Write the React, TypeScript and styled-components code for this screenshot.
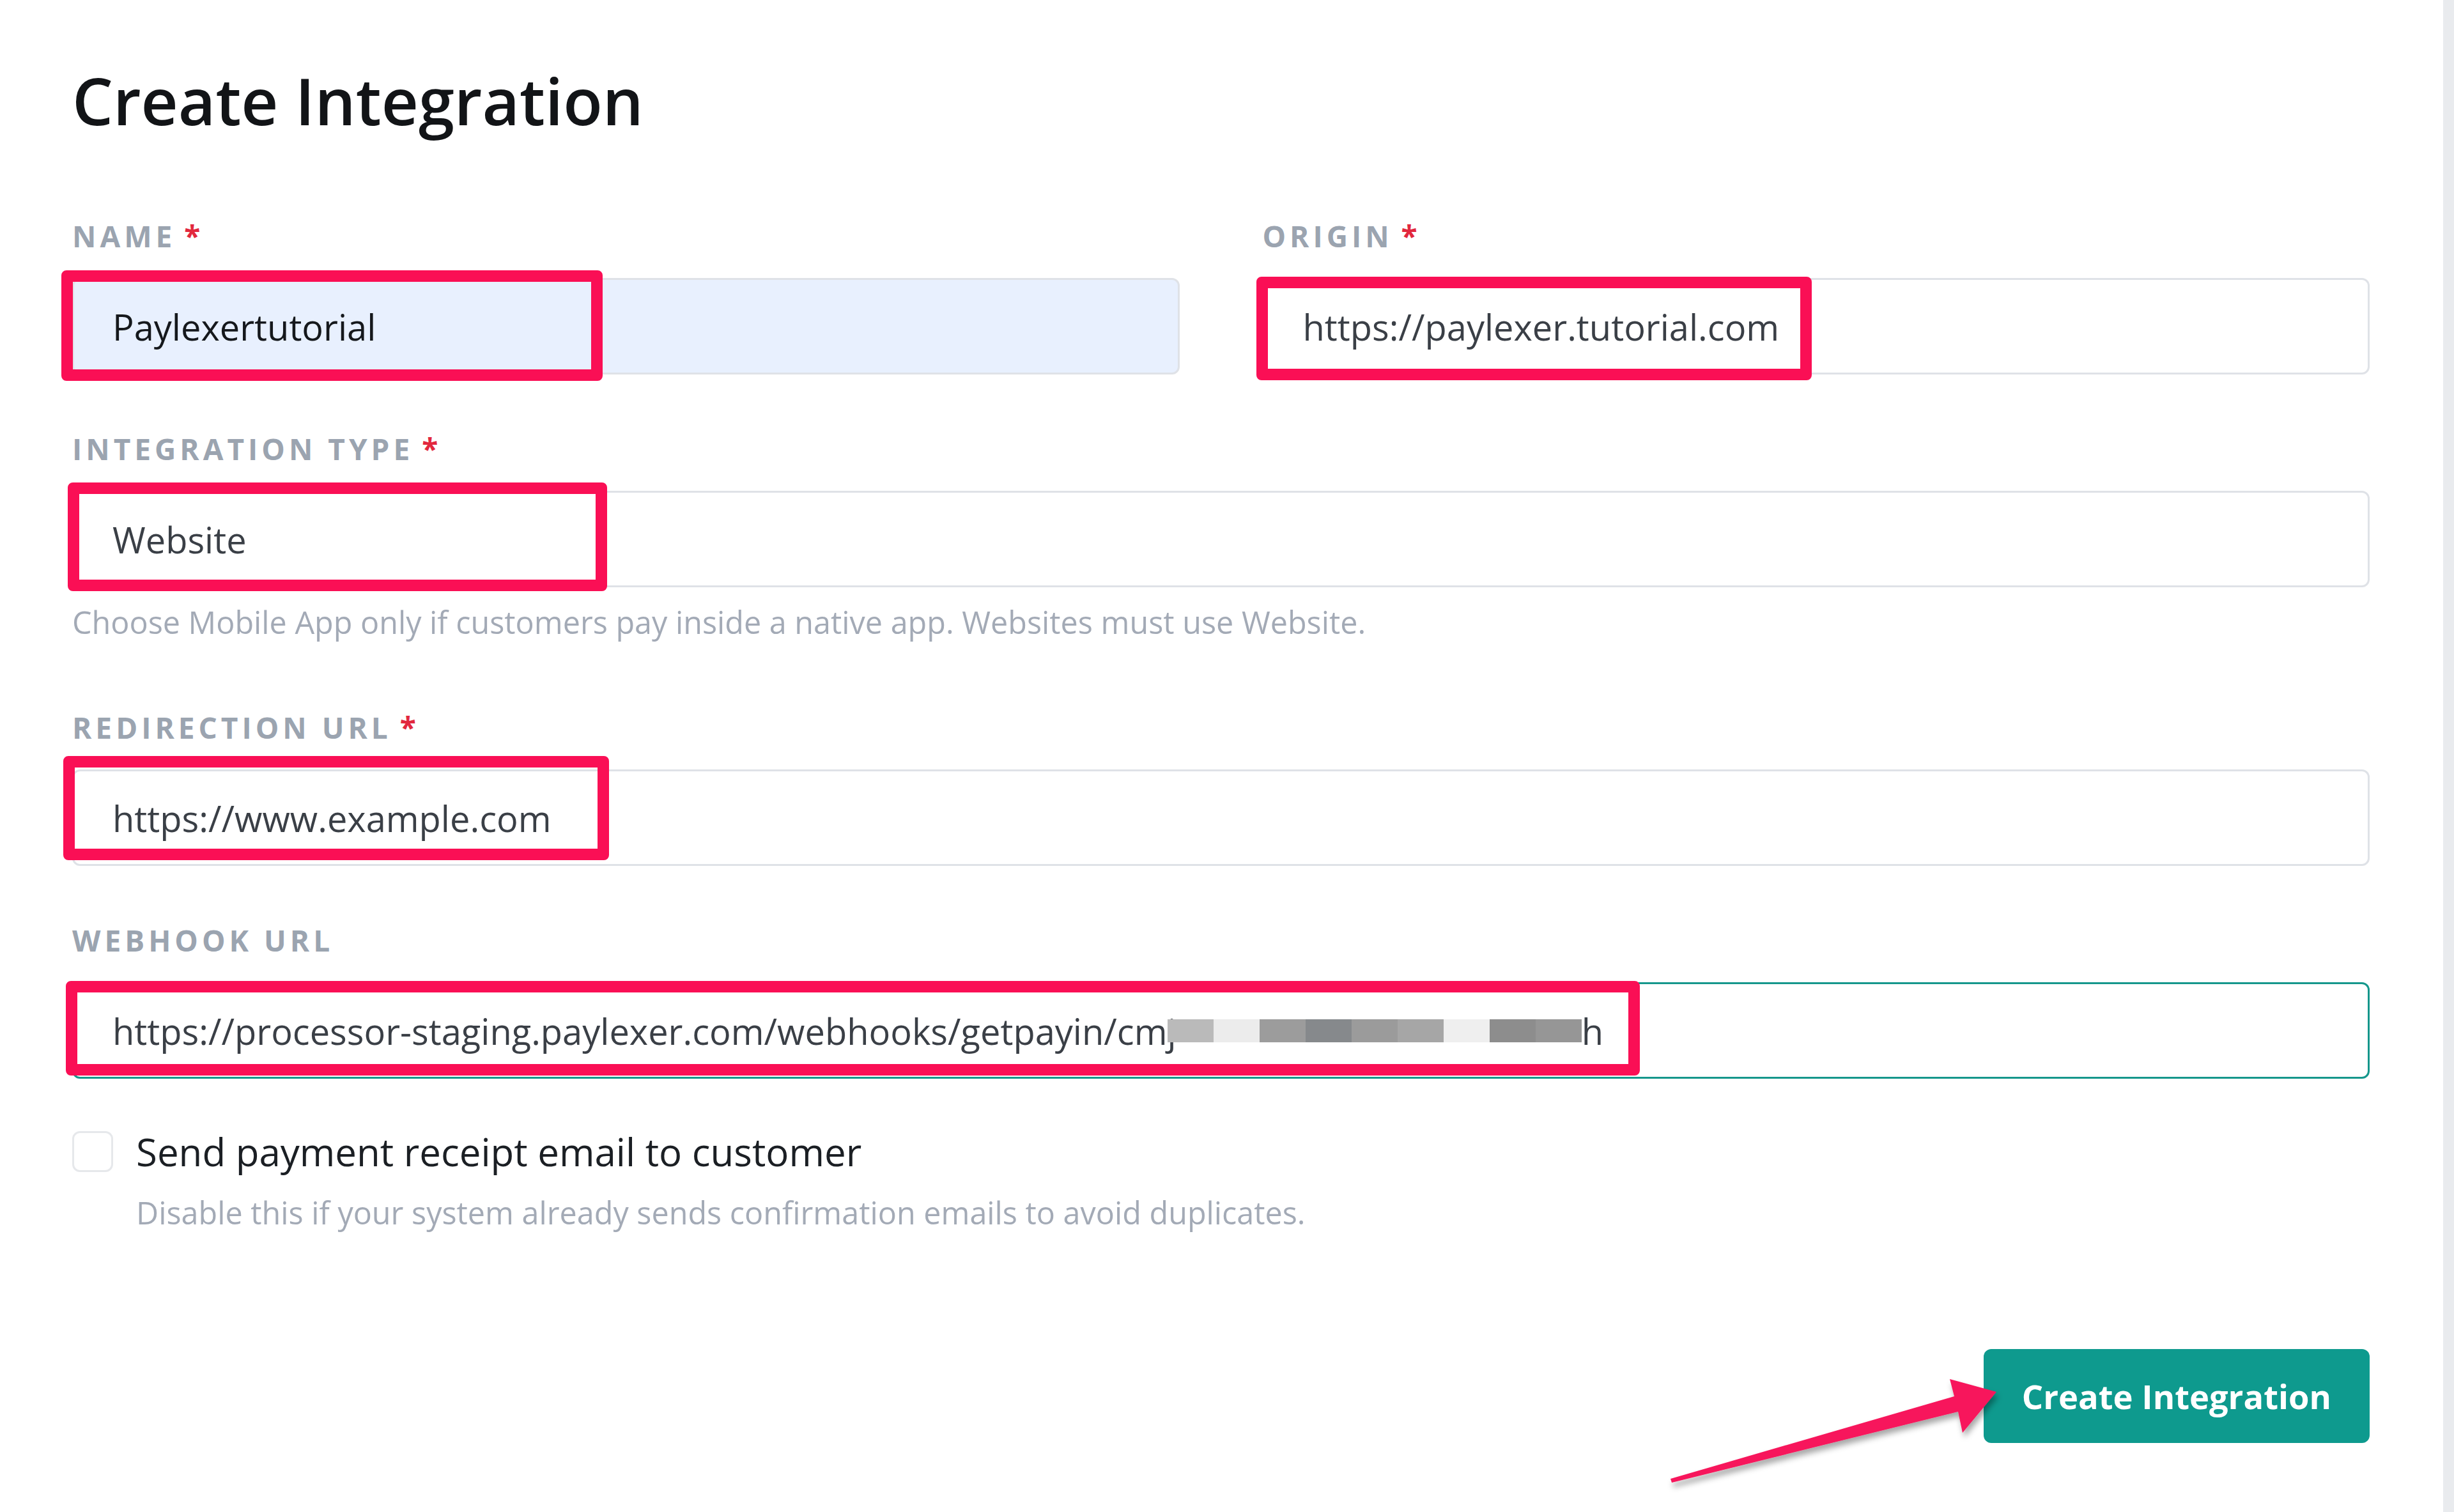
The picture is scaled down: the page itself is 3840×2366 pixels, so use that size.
import React from 'react';
import styled, { createGlobalStyle } from 'styled-components';

const GlobalStyle = createGlobalStyle`
  html, body {
    margin: 0;
    padding: 0;
    background: #ffffff;
  }
  body {
    font-family: "Open Sans", "Noto Sans", sans-serif;
    color: #1f2733;
  }
`;

const Shell = styled.div`
  display: flex;
  min-height: 2366px;
`;

const Main = styled.main`
  flex: 1;
  padding: 97px 115px 0 113px;
`;

const ScrollTrack = styled.div`
  flex-shrink: 0;
  width: 17px;
  background: #e9ebee;
`;

const Title = styled.h1`
  margin: 0 0 128px;
  font-size: 101px;
  font-weight: 600;
  line-height: 1.2;
  color: #121417;
`;

const Row = styled.div`
  display: grid;
  grid-template-columns: 1fr 1fr;
  column-gap: 130px;
`;

const Field = styled.div<{ $after?: number }>`
  margin-bottom: ${(p) => p.$after ?? 93}px;
`;

const Label = styled.div`
  margin-bottom: 43px;
  font-size: 46px;
  line-height: 46px;
  font-weight: 700;
  letter-spacing: 6px;
  text-transform: uppercase;
  color: #9ba4b0;
`;

const Required = styled.span`
  margin-left: -5px;
  color: #e2283e;
`;

const InputWrap = styled.div`
  position: relative;
`;

const TextBox = styled.div<{ $autofill?: boolean; $focused?: boolean }>`
  box-sizing: border-box;
  display: flex;
  align-items: center;
  height: 151px;
  padding: 0 60px;
  border: 3px solid ${(p) => (p.$focused ? '#15978c' : '#dfe2e7')};
  border-radius: 12px;
  background: ${(p) => (p.$autofill ? '#e8f0fe' : '#ffffff')};
  font-size: 56px;
  color: ${(p) => (p.$autofill ? '#15181c' : '#3a3f46')};
  white-space: nowrap;
  overflow: hidden;
`;

// pink callout frame drawn over a field
const Callout = styled.div<{ $x: number; $y: number; $w: number; $h: number }>`
  position: absolute;
  left: ${(p) => p.$x}px;
  top: ${(p) => p.$y}px;
  width: ${(p) => p.$w}px;
  height: ${(p) => p.$h}px;
  box-sizing: border-box;
  border: 18px solid #fa0f55;
  border-radius: 8px;
  pointer-events: none;
`;

const Redacted = styled.span<{ $tone: string }>`
  display: inline-block;
  width: 72px;
  height: 36px;
  background: ${(p) => p.$tone};
`;

const RedactedRun = styled.span`
  display: inline-flex;
  margin-left: -14px;
  vertical-align: 4px;
`;

const Hint = styled.div<{ $indent?: number }>`
  margin-top: 22px;
  padding-left: ${(p) => p.$indent ?? 0}px;
  font-size: 48.5px;
  line-height: 64px;
  color: #a3aab6;
`;

const CheckRow = styled.label`
  display: flex;
  align-items: center;
  gap: 36px;
  margin-top: -20px;
  font-size: 60px;
  color: #1b1f24;
`;

const CheckBox = styled.span`
  box-sizing: border-box;
  width: 64px;
  height: 64px;
  border: 3px solid #e6e8eb;
  border-radius: 12px;
  background: #ffffff;
`;

const ActionRow = styled.div`
  position: relative;
  display: flex;
  justify-content: flex-end;
  margin-top: 182px;
`;

const PrimaryButton = styled.button`
  height: 147px;
  padding: 0 60px;
  border: none;
  border-radius: 12px;
  background: #0e9a8e;
  color: #ffffff;
  font-family: inherit;
  font-size: 52.5px;
  font-weight: 700;
  cursor: pointer;
`;

const Pointer = styled.svg`
  position: absolute;
  right: 578px;
  top: 39px;
  overflow: visible;
`;

const redactTones = ['#bababa', '#ececec', '#9c9c9c', '#86898c', '#9b9b9b', '#a6a6a6', '#efefef', '#8d8d8d', '#969696'];

export default function App() {
  return (
    <>
      <GlobalStyle />
      <Shell>
        <Main>
          <Title>Create Integration</Title>

          <Row>
            <Field>
              <Label>
                Name <Required>*</Required>
              </Label>
              <InputWrap>
                <TextBox $autofill>Paylexertutorial</TextBox>
                <Callout $x={-17} $y={-12} $w={847} $h={173} />
              </InputWrap>
            </Field>
            <Field>
              <Label>
                Origin <Required>*</Required>
              </Label>
              <InputWrap>
                <TextBox>https://paylexer.tutorial.com</TextBox>
                <Callout $x={-10} $y={-2} $w={869} $h={162} />
              </InputWrap>
            </Field>
          </Row>

          <Field $after={110}>
            <Label>
              Integration Type <Required>*</Required>
            </Label>
            <InputWrap>
              <TextBox>Website</TextBox>
              <Callout $x={-7} $y={-13} $w={844} $h={170} />
            </InputWrap>
            <Hint>Choose Mobile App only if customers pay inside a native app. Websites must use Website.</Hint>
          </Field>

          <Field>
            <Label>
              Redirection URL <Required>*</Required>
            </Label>
            <InputWrap>
              <TextBox>https://www.example.com</TextBox>
              <Callout $x={-14} $y={-21} $w={854} $h={163} />
            </InputWrap>
          </Field>

          <Field>
            <Label>Webhook URL</Label>
            <InputWrap>
              <TextBox $focused>
                <span>
                  https://processor-staging.paylexer.com/webhooks/getpayin/cmj
                  <RedactedRun>
                    {redactTones.map((tone, i) => (
                      <Redacted key={i} $tone={tone} />
                    ))}
                  </RedactedRun>
                  h
                </span>
              </TextBox>
              <Callout $x={-10} $y={-2} $w={2463} $h={148} />
            </InputWrap>
          </Field>

          <CheckRow>
            <CheckBox />
            Send payment receipt email to customer
          </CheckRow>
          <Hint $indent={100}>Disable this if your system already sends confirmation emails to avoid duplicates.</Hint>

          <ActionRow>
            <Pointer width="530" height="180" viewBox="0 0 530 180">
              <defs>
                <filter id="arrowShadow" x="-10%" y="-30%" width="130%" height="170%">
                  <feDropShadow dx="3" dy="7" stdDeviation="5" floodColor="#000" floodOpacity="0.35" />
                </filter>
              </defs>
              <polygon
                points="14,164 458,35 451,8 524,28 471,92 464,59 16,170"
                fill="#f7185b"
                filter="url(#arrowShadow)"
              />
            </Pointer>
            <PrimaryButton>Create Integration</PrimaryButton>
          </ActionRow>
        </Main>
        <ScrollTrack />
      </Shell>
    </>
  );
}
